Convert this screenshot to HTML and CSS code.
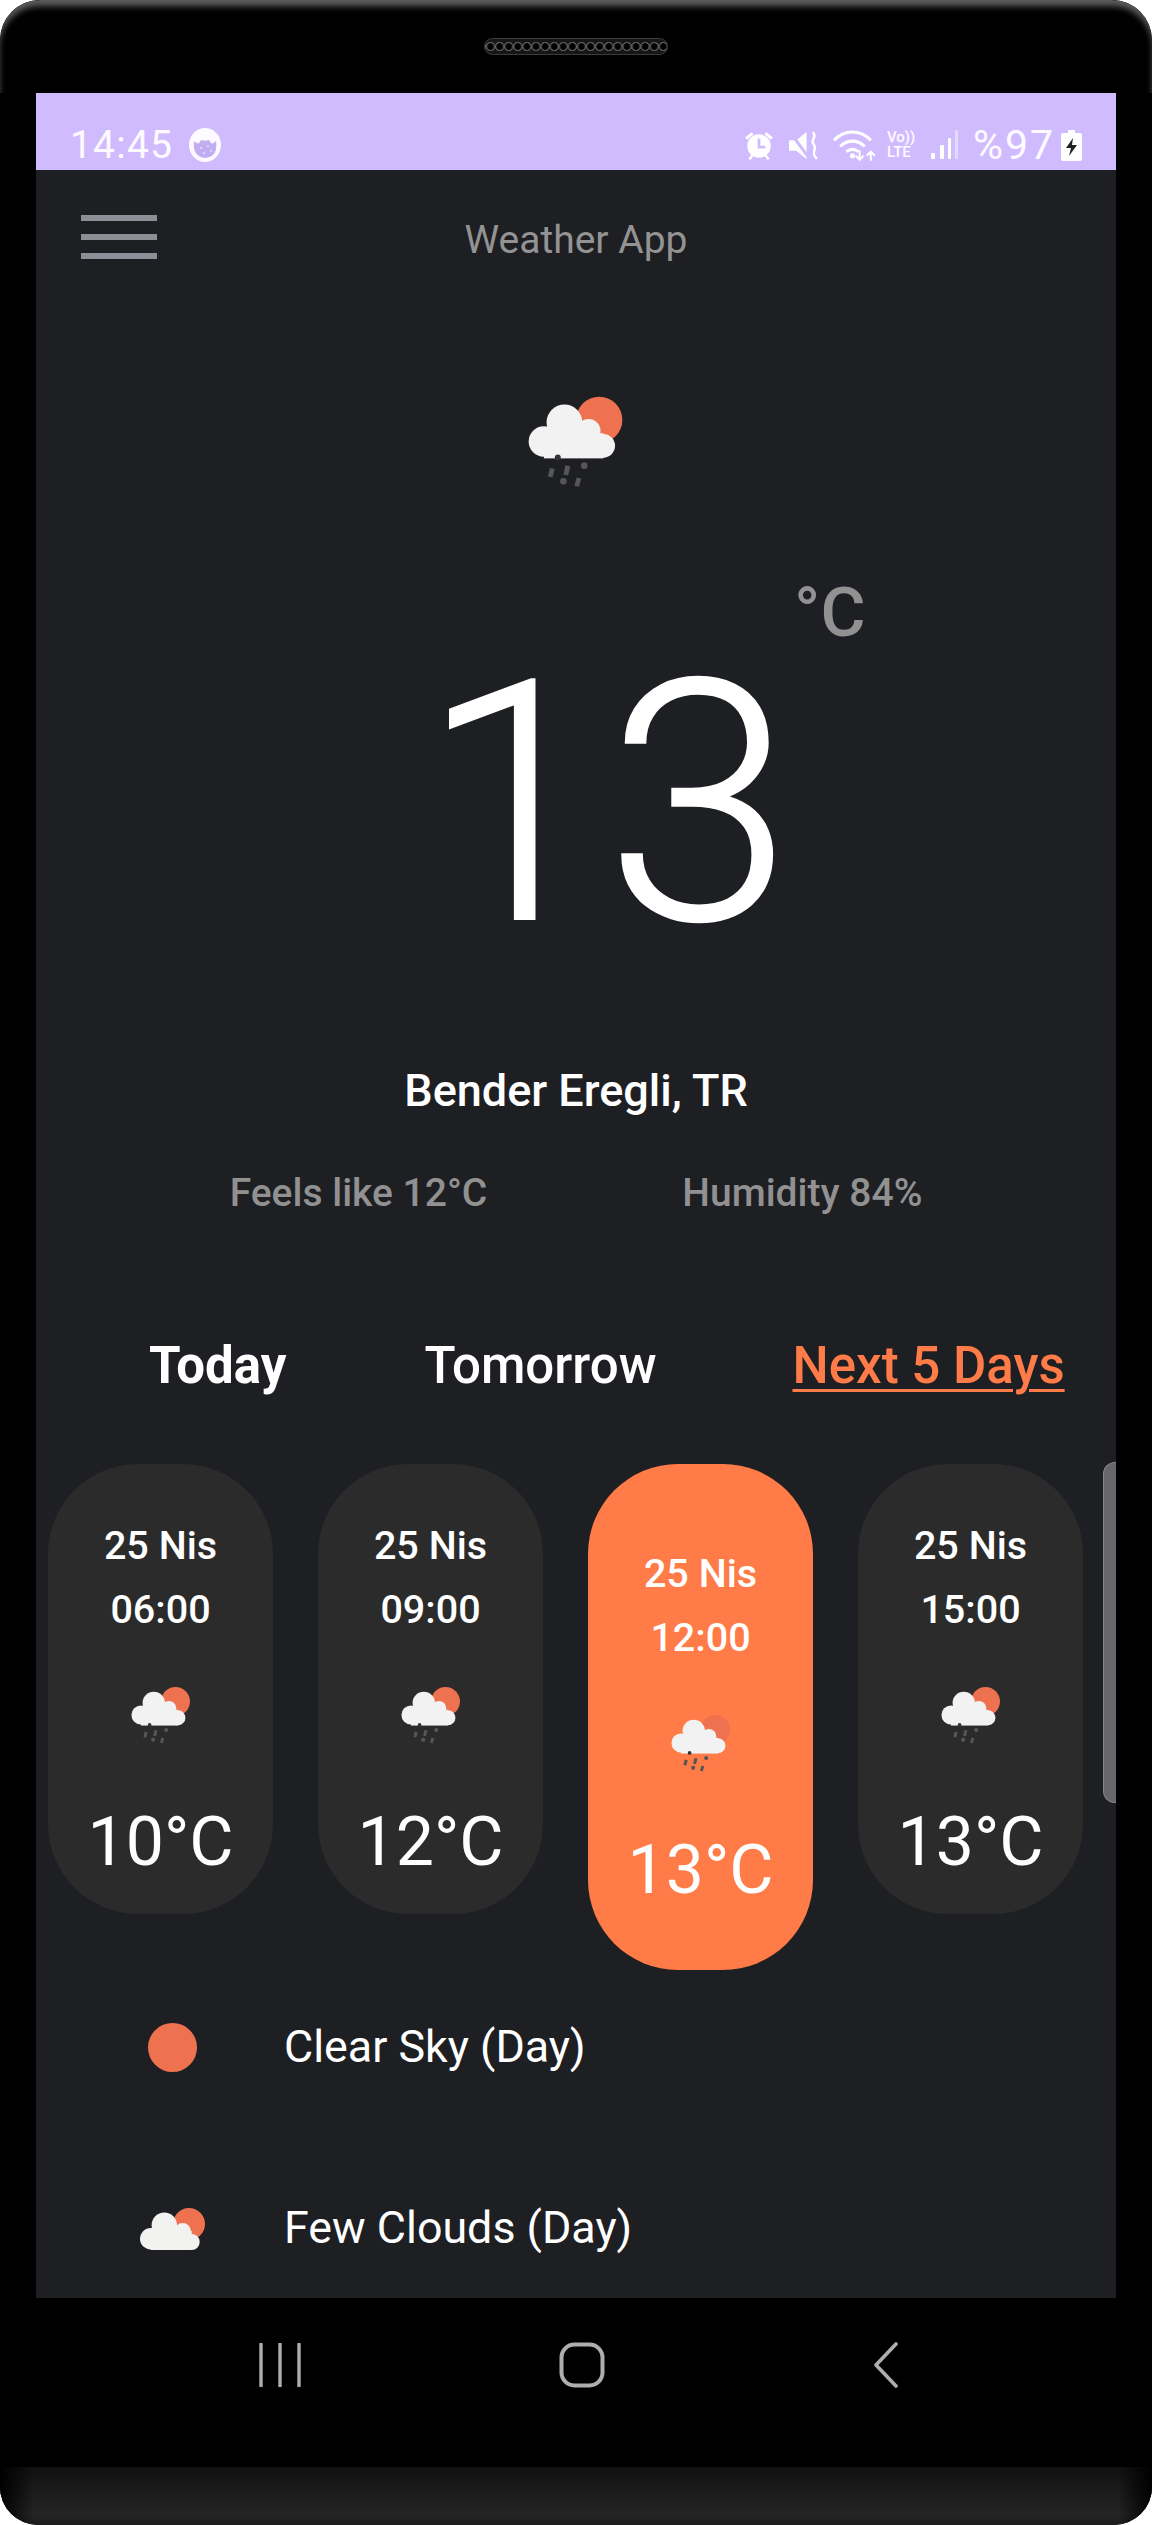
FILE: index.html
```html
<!DOCTYPE html>
<html lang="en">
<head>
<meta charset="utf-8">
<title>Weather App</title>
<link rel="stylesheet" href="styles.css">
</head>
<body>
<svg class="defs" width="0" height="0" aria-hidden="true">
  <symbol id="rain-cloud" viewBox="145 100 290 280">
    <circle cx="360" cy="175" r="70" fill="#ee7150"/>
    <g fill="#f2f2f2">
      <circle cx="193" cy="240" r="46"/>
      <circle cx="255" cy="182" r="54"/>
      <circle cx="328" cy="208" r="36"/>
      <circle cx="372" cy="253" r="36"/>
      <rect x="193" y="215" width="180" height="76"/>
    </g>
    <circle cx="235" cy="288" r="9" fill="#333"/>
    <g fill="#565656">
      <path d="M211 320l15 3-7 26-14-3z"/>
      <path d="M258 312l15 3-7 28-14-3z"/>
      <path d="M292 349l14 3-7 25-14-3z"/>
      <circle cx="315" cy="313" r="10"/>
      <circle cx="252" cy="360" r="10"/>
    </g>
  </symbol>
  <symbol id="few-clouds" viewBox="0 0 65 43">
    <circle cx="49" cy="17" r="16" fill="#ee7150"/>
    <g fill="#f2f2f1">
      <circle cx="10.7" cy="31.7" r="10.7"/>
      <circle cx="24.3" cy="18.3" r="12.7"/>
      <circle cx="42.7" cy="24.3" r="8.3"/>
      <circle cx="51.7" cy="35" r="8"/>
      <rect x="10.7" y="24" width="41" height="19"/>
    </g>
  </symbol>
</svg>

<div class="phone">
  <div class="bezel-top"><div class="speaker"></div></div>

  <main class="screen">
    <div class="status">
      <div class="status-left">
        <span class="clock">14:45</span>
        <svg class="cat" viewBox="0 0 32 34"><ellipse cx="16" cy="17" rx="16" ry="17" fill="#fdfbff"/><path d="M5 13c2 2 4 3 5 2l2-3c3 1 5 1 8 0l2 3c1 1 3 0 5-2 1 8 0 16-11 17C6 29 4 21 5 13z" fill="#c3adf2"/><g fill="#e6dcff"><circle cx="12" cy="20" r="1"/><circle cx="19" cy="18" r="1"/><circle cx="22" cy="23" r="1"/><circle cx="15" cy="25" r="1"/></g></svg>
      </div>
      <div class="status-right">
        <svg class="ico-alarm" viewBox="0 0 30 28"><circle cx="15" cy="15" r="11" fill="#fff"/><path d="M2 7l6-5 2 2-6 5zM28 7l-6-5-2 2 6 5zM5 27l3-4 2 1-3 4zM25 27l-3-4-2 1 3 4z" fill="#fff"/><path d="M15 8v8h6" fill="none" stroke="#d1bbff" stroke-width="2.5"/></svg>
        <svg class="ico-mute" viewBox="0 0 30 28"><path d="M0 9h7l10-8v26L7 19H0z" fill="#fff"/><path d="M1 1l19 26" stroke="#d1bbff" stroke-width="3"/><path d="M23 1c5 5-3 7 1 12s-4 7 3 14" fill="none" stroke="#fff" stroke-width="2.5"/></svg>
        <svg class="ico-wifi" viewBox="0 0 45 32"><g fill="none" stroke="#fff" stroke-width="3"><path d="M2 11c10-11 26-11 36 0"/><path d="M8 17c7-7 17-7 24 0"/><path d="M14 22c4-3 8-3 12 0"/><path d="M27 21v9M23 26l4 4 4-4M38 31v-9M34 26l4-4 4 4" stroke-width="2"/></g><circle cx="20" cy="26" r="2.5" fill="#fff"/></svg>
        <div class="volte"><span>Vo))</span><span>LTE</span></div>
        <svg class="ico-signal" viewBox="0 0 28 30"><g fill="#fff"><rect x="1" y="23" width="4" height="6" rx="1"/><rect x="10" y="15" width="4" height="14" rx="1"/><rect x="18" y="8" width="3" height="21" rx="1"/><rect x="25" y="0" width="3" height="29" rx="1" opacity=".45"/></g></svg>
        <span class="battery-text">%97</span>
        <svg class="ico-battery" viewBox="0 0 21 31"><path d="M7 0h7v3h5a2 2 0 0 1 2 2v24a2 2 0 0 1-2 2H2a2 2 0 0 1-2-2V5a2 2 0 0 1 2-2h5z" fill="#fff"/><path d="M12 8l-7 10h5l-2 8 8-11h-5z" fill="#1f2024"/></svg>
      </div>
    </div>

    <header class="topbar">
      <div class="menu"><span></span><span></span><span></span></div>
      <h1 class="title">Weather App</h1>
    </header>

    <section class="hero">
      <svg class="hero-icon"><use href="#rain-cloud"/></svg>
      <div class="temp">
        <span class="temp-value">13</span>
        <span class="temp-unit">°C</span>
      </div>
      <div class="city">Bender Eregli, TR</div>
      <div class="facts">
        <span>Feels like 12°C</span>
        <span>Humidity 84%</span>
      </div>
    </section>

    <nav class="tabs">
      <span class="tab tab-active">Today</span>
      <span class="tab">Tomorrow</span>
      <span class="tab tab-link">Next 5 Days</span>
    </nav>

    <section class="cards">
      <article class="card">
        <div class="card-date">25 Nis</div>
        <div class="card-time">06:00</div>
        <svg class="card-icon"><use href="#rain-cloud"/></svg>
        <div class="card-temp">10°C</div>
      </article>
      <article class="card">
        <div class="card-date">25 Nis</div>
        <div class="card-time">09:00</div>
        <svg class="card-icon"><use href="#rain-cloud"/></svg>
        <div class="card-temp">12°C</div>
      </article>
      <article class="card card-active">
        <div class="card-date">25 Nis</div>
        <div class="card-time">12:00</div>
        <svg class="card-icon"><use href="#rain-cloud"/></svg>
        <div class="card-temp">13°C</div>
      </article>
      <article class="card">
        <div class="card-date">25 Nis</div>
        <div class="card-time">15:00</div>
        <svg class="card-icon"><use href="#rain-cloud"/></svg>
        <div class="card-temp">13°C</div>
      </article>
      <div class="scroll-thumb"></div>
    </section>

    <ul class="legend">
      <li class="legend-row">
        <span class="legend-icon"><span class="sun-dot"></span></span>
        <span>Clear Sky (Day)</span>
      </li>
      <li class="legend-row">
        <span class="legend-icon"><svg class="few"><use href="#few-clouds"/></svg></span>
        <span>Few Clouds (Day)</span>
      </li>
    </ul>
  </main>

  <div class="navbar">
    <svg class="nav-recents" viewBox="0 0 44 44"><path d="M3 1v42M22 1v42M41 1v42" stroke="#aeaeae" stroke-width="3.4" stroke-linecap="round" fill="none"/></svg>
    <svg class="nav-home" viewBox="0 0 46 46"><rect x="2.5" y="2.5" width="41" height="41" rx="13" stroke="#aeaeae" stroke-width="4" fill="none"/></svg>
    <svg class="nav-back" viewBox="0 0 26 46"><path d="M23 2L3 23l20 21" stroke="#aeaeae" stroke-width="3.6" stroke-linecap="round" stroke-linejoin="round" fill="none"/></svg>
  </div>
  <div class="chin"></div>
</div>
</body>
</html>
```

FILE: styles.css
```css
* { box-sizing: border-box; }
html, body { margin: 0; padding: 0; background: #fff; }
body { font-family: Roboto, "Liberation Sans", sans-serif; }
.defs { display: block; height: 0; }

.phone {
  width: 1152px;
  height: 2525px;
  background: #000;
  border-radius: 40px 40px 38px 38px;
  overflow: hidden;
  display: flex;
  flex-direction: column;
}
.bezel-top {
  height: 93px;
  flex: none;
  display: flex;
  justify-content: center;
  padding-top: 38px;
  border-radius: 40px 40px 0 0;
  background: #000;
  box-shadow: inset 0 7px 6px -1px #5e5e5e;
}
.speaker {
  width: 184px;
  height: 17px;
  border-radius: 9px;
  border: 1px solid #3c3c3c;
  background-color: #161616;
  background-image: radial-gradient(circle, #000 0 3px, #5a5a5a 3.6px 4.3px, #161616 5px);
  background-size: 9.1px 100%;
  background-position: 1px 0;
}

.screen {
  margin: 0 36px;
  height: 2205px;
  background: #1e1f23;
  overflow: hidden;
  color: #fff;
  flex: none;
}

.status {
  height: 77px;
  background: #d1bbff;
  display: flex;
  justify-content: space-between;
  align-items: flex-end;
  padding: 0 34px 2px;
  color: #fdfbff;
}
.status-left, .status-right { display: flex; align-items: center; }
.clock { font-size: 39px; font-weight: 400; line-height: 46px; letter-spacing: 1.2px; }
.cat { width: 32px; height: 34px; margin-left: 16px; }
.status-right svg { flex: none; }
.ico-alarm { width: 32px; height: 30px; }
.ico-mute { width: 31px; height: 29px; margin-left: 14px; }
.ico-wifi { width: 46px; height: 33px; margin-left: 12px; }
.volte {
  display: flex;
  flex-direction: column;
  margin-left: 9px;
  width: 31px;
  font-size: 15px;
  line-height: 15px;
  font-weight: 500;
}
.ico-signal { width: 28px; height: 30px; margin-left: 12px; }
.battery-text { font-size: 41px; font-weight: 400; line-height: 46px; margin-left: 15px; letter-spacing: 2px; }
.ico-battery { width: 21px; height: 31px; margin-left: 6px; }

.topbar {
  position: relative;
  height: 140px;
  display: flex;
  align-items: center;
  justify-content: center;
}
.menu {
  position: absolute;
  left: 45px;
  top: 45px;
  width: 76px;
  display: flex;
  flex-direction: column;
  gap: 13px;
}
.menu span { height: 6px; background: #8d8e96; }
.title {
  margin: 0;
  font-size: 39px;
  font-weight: 400;
  color: #939393;
  line-height: 46px;
}

.hero { display: flex; flex-direction: column; align-items: center; padding-top: 85px; }
.hero-icon { width: 96px; height: 93px; display: block; margin-left: -1px; }
.temp {
  position: relative;
  display: flex;
  justify-content: center;
  width: 100%;
  height: 410px;
  margin-top: 111px;
  padding-left: 60px;
}
.temp-value { font-size: 336px; line-height: 410px; font-weight: 300; letter-spacing: -1px; color: #fff; -webkit-text-stroke: 2px #fff; }
.temp-unit {
  position: absolute;
  left: 758px;
  top: -24px;
  font-size: 69px;
  line-height: 76px;
  font-weight: 500;
  color: #919191;
}
.city { font-size: 45px; line-height: 52px; font-weight: 500; margin-top: 56px; }
.facts {
  display: flex;
  gap: 195px;
  margin-top: 53px;
  font-size: 39px;
  line-height: 46px;
  font-weight: 500;
  color: #919191;
}

.tabs {
  display: flex;
  height: 70px;
  margin-top: 115px;
  align-items: center;
  padding-left: 113px;
  font-size: 51px;
  line-height: 60px;
  font-weight: 500;
}
.tab-active { font-weight: 700; }
.tab:nth-child(2) { margin-left: 138px; }
.tab:nth-child(3) { margin-left: 136px; }
.tab-link { color: #ff7b47; text-decoration: underline; text-decoration-thickness: 3px; text-underline-offset: 6px; }

.cards {
  position: relative;
  display: flex;
  align-items: flex-start;
  gap: 45px;
  padding: 0 0 0 12px;
  margin-top: 63px;
}
.card {
  width: 225px;
  flex: none;
  padding-top: 58px;
  height: 450px;
  background: #2b2b2c;
  border-radius: 90px;
  display: flex;
  flex-direction: column;
  align-items: center;
}
.card-active { height: 506px; padding-top: 86px; background: #ff7b47; }
.card-date, .card-time { font-size: 39.5px; line-height: 48px; font-weight: 500; }
.card-time { margin-top: 16px; }
.card-icon { width: 60px; height: 58px; flex: none; display: block; margin-top: 52px; }
.card-temp { font-size: 68px; line-height: 78px; margin-top: 59px; }
.scroll-thumb {
  position: absolute;
  right: 0;
  top: -2px;
  width: 13px;
  height: 341px;
  background: #67686b;
  border: 1px solid #85868a;
  border-right: 0;
  border-radius: 12px 0 0 12px;
}

.legend {
  list-style: none;
  margin: 27px 0 0;
  padding: 0 0 0 104px;
  display: flex;
  flex-direction: column;
  gap: 81px;
  font-size: 44.8px;
  line-height: 54px;
}
.legend-row { display: flex; align-items: center; height: 100px; }
.legend-icon { width: 144px; flex: none; display: flex; align-items: center; }
.sun-dot { width: 49px; height: 49px; margin-left: 8px; border-radius: 50%; background: #ee7150; display: block; }
.few { width: 65px; height: 43px; display: block; }

.navbar {
  height: 169px;
  flex: none;
  display: flex;
  align-items: center;
  padding: 0 0 36px 258px;
}
.nav-recents { width: 44px; height: 44px; }
.nav-home { width: 46px; height: 46px; margin-left: 257px; }
.nav-back { width: 26px; height: 46px; margin-left: 268px; }
.chin {
  flex: 1;
  background:
    linear-gradient(90deg, #000 0, rgba(0,0,0,0) 34px, rgba(0,0,0,0) calc(100% - 34px), #000 100%),
    linear-gradient(#111 0, #242424 82%, #1c1c1c 100%);
}
```
